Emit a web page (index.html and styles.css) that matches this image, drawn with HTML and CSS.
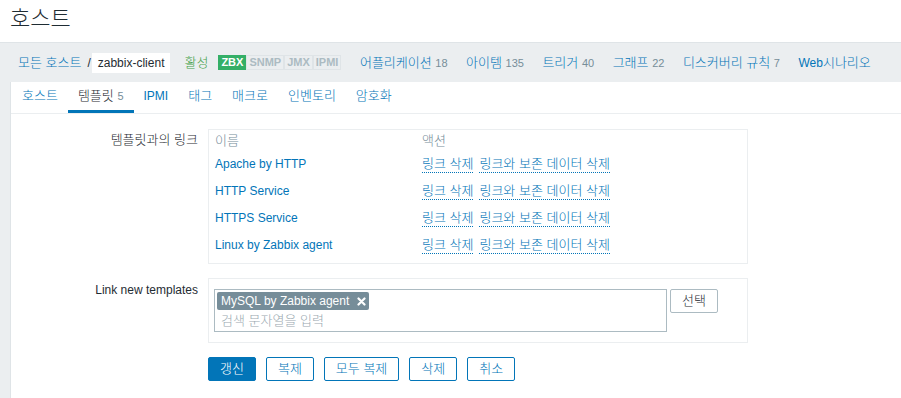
FILE: index.html
```html
<!DOCTYPE html>
<html lang="ko">
<head>
  <meta charset="UTF-8">
  <title>호스트</title>
  <link rel="stylesheet" href="styles.css">
</head>
<body>

<header class="page-header">
  <h1>호스트</h1>
</header>

<div class="wrapper">
  <div class="host-nav">
    <a class="link" href="#">모든 호스트</a>
    <span class="sep">/</span>
    <span class="host-name">zabbix-client</span>
    <span class="status">활성</span>
    <span class="badges">
      <span class="badge on">ZBX</span><span class="badge">SNMP</span><span class="badge">JMX</span><span class="badge">IPMI</span>
    </span>
    <a class="nav-item" href="#">어플리케이션 <sup>18</sup></a>
    <a class="nav-item" href="#">아이템 <sup>135</sup></a>
    <a class="nav-item" href="#">트리거 <sup>40</sup></a>
    <a class="nav-item" href="#">그래프 <sup>22</sup></a>
    <a class="nav-item" href="#">디스커버리 규칙 <sup>7</sup></a>
    <a class="nav-item" href="#"><span class="en">Web</span>시나리오</a>
  </div>

  <div class="panel">
    <ul class="tabs">
      <li><a href="#">호스트</a></li>
      <li class="active"><a href="#">템플릿 <sup>5</sup></a></li>
      <li><a class="en" href="#">IPMI</a></li>
      <li><a href="#">태그</a></li>
      <li><a href="#">매크로</a></li>
      <li><a href="#">인벤토리</a></li>
      <li><a href="#">암호화</a></li>
    </ul>

    <form class="form">
      <label class="form-label">템플릿과의 링크</label>
      <div class="box">
        <table class="linked">
          <thead>
            <tr><th class="col-name">이름</th><th>액션</th></tr>
          </thead>
          <tbody>
            <tr>
              <td><a class="en" href="#">Apache by HTTP</a></td>
              <td><a class="action" href="#">링크 삭제</a><a class="action" href="#">링크와 보존 데이터 삭제</a></td>
            </tr>
            <tr>
              <td><a class="en" href="#">HTTP Service</a></td>
              <td><a class="action" href="#">링크 삭제</a><a class="action" href="#">링크와 보존 데이터 삭제</a></td>
            </tr>
            <tr>
              <td><a class="en" href="#">HTTPS Service</a></td>
              <td><a class="action" href="#">링크 삭제</a><a class="action" href="#">링크와 보존 데이터 삭제</a></td>
            </tr>
            <tr>
              <td><a class="en" href="#">Linux by Zabbix agent</a></td>
              <td><a class="action" href="#">링크 삭제</a><a class="action" href="#">링크와 보존 데이터 삭제</a></td>
            </tr>
          </tbody>
        </table>
      </div>

      <label class="form-label en">Link new templates</label>
      <div class="box new-templates">
        <div class="multiselect">
          <span class="tag">MySQL by Zabbix agent
            <svg class="tag-x" width="9" height="9" viewBox="0 0 9 9"><path d="M1.5 1.5 L7.5 7.5 M7.5 1.5 L1.5 7.5" stroke="#fff" stroke-width="2.2" stroke-linecap="round"/></svg>
          </span>
          <input type="text" placeholder="검색 문자열을 입력">
        </div>
        <button type="button" class="btn-grey">선택</button>
      </div>

      <div class="form-actions">
        <button type="button" class="btn-main">갱신</button>
        <button type="button" class="btn-alt">복제</button>
        <button type="button" class="btn-alt">모두 복제</button>
        <button type="button" class="btn-alt">삭제</button>
        <button type="button" class="btn-alt">취소</button>
      </div>
    </form>
  </div>
</div>

</body>
</html>
```

FILE: styles.css
```css
/* hangul glyphs run narrow at 12px, so base text is 13px light and latin text is set back to 12px regular */
body {
  margin: 0;
  font-family: "Liberation Sans", "Noto Sans CJK KR", sans-serif;
  font-size: 13px;
  font-weight: 300;
  line-height: 16px;
  color: #1f2c33;
  background: #ebeef0;
}
.en {
  font-size: 12px;
  font-weight: 400;
}
a {
  color: #0275b8;
  text-decoration: none;
}
sup {
  font-size: 11px;
  font-weight: 400;
  color: #768d99;
  vertical-align: baseline;
}
.page-header {
  background: white;
  height: 42px;
  border-bottom: 1px solid #dfe4e7;
  padding-left: 10px;
}
.page-header h1 {
  margin: 0;
  font-size: 22px;
  font-weight: 300;
  line-height: 38px;
}
.wrapper {
  padding-left: 10px;
}
.host-nav {
  display: flex;
  align-items: center;
  height: 39px;
  padding-left: 8px;
  white-space: nowrap;
}
.sep {
  margin: 0 1px 0 6px;
  font-size: 12px;
  font-weight: 400;
}
.host-name {
  background: white;
  padding: 0 6px;
  line-height: 20px;
  font-size: 12px;
  font-weight: 400;
}
.status {
  color: #429e47;
  margin-left: 14px;
}
.badges {
  display: flex;
  margin-left: 10px;
}
.badge {
  font-size: 11px;
  font-weight: bold;
  line-height: 13px;
  padding: 0 2px;
  border: 1px solid #dfe4e7;
  color: #acbbc2;
  background: #ebeef0;
}
.badge.on {
  background: #34af67;
  border-color: #34af67;
  color: white;
}
.nav-item {
  margin-left: 18.5px;
}
.nav-item:first-of-type {
  margin-left: 24px;
}
.panel {
  background: white;
  border-left: 1px solid #dfe4e7;
  min-height: 320px;
}
.tabs {
  display: flex;
  list-style: none;
  margin: 0;
  padding: 0 0 0 1px;
  border-bottom: 1px solid #ebeef0;
}
.tabs li {
  padding: 0 10px;
  line-height: 28px;
  border-bottom: 3px solid transparent;
}
.tabs li.active {
  border-bottom-color: #0275b8;
}
.tabs li.active a {
  color: #1f2c33;
}
.form {
  display: grid;
  grid-template-columns: 187px 540px;
  column-gap: 10px;
  row-gap: 14px;
  padding-top: 15px;
}
.form-label {
  text-align: right;
  padding-top: 3px;
}
.form-label.en {
  padding-top: 4px;
}
.box {
  border: 1px solid #ebeef0;
  padding: 0 6px;
}
.linked {
  border-collapse: collapse;
  width: 100%;
}
.linked th {
  text-align: left;
  font-weight: 300;
  color: #768d99;
  padding: 3px 0 7px;
}
.linked .col-name {
  width: 207px;
}
.linked td {
  padding: 0 0 11px;
}
.linked tr:last-child td {
  padding-bottom: 10px;
}
.action {
  border-bottom: 1px dotted #0275b8;
  padding-bottom: 1px;
  margin-right: 6px;
}
.new-templates {
  display: flex;
  align-items: flex-start;
  padding: 10px 5px;
}
.multiselect {
  width: 447px;
  border: 1px solid #acbbc2;
  padding: 2px 2px 1px;
}
.tag {
  display: inline-flex;
  align-items: center;
  height: 18px;
  padding: 0 3px 0 4px;
  background: #768d99;
  color: white;
  border-radius: 2px;
  font-size: 12px;
  font-weight: 400;
}
.tag-x {
  margin-left: 8px;
}
.multiselect input {
  display: block;
  width: 100%;
  box-sizing: border-box;
  border: none;
  outline: none;
  height: 20px;
  padding: 0 4px;
  font: inherit;
  color: #1f2c33;
}
.multiselect input::placeholder {
  color: #9aa9b0;
}
button {
  font: inherit;
  height: 24px;
  padding: 0 11px;
  border-radius: 2px;
  cursor: pointer;
}
.btn-grey {
  margin-left: 3px;
  background: white;
  border: 1px solid #acbbc2;
  color: #1f2c33;
}
.form-actions {
  grid-column: 2;
  display: flex;
  gap: 10px;
}
.btn-main {
  background: #0275b8;
  border: 1px solid #0275b8;
  color: white;
}
.btn-alt {
  background: white;
  border: 1px solid #0275b8;
  color: #0275b8;
}
```
